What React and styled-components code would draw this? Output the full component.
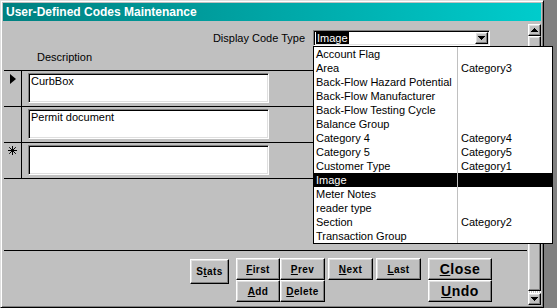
import React from 'react';
import styled, { createGlobalStyle } from 'styled-components';

const GlobalStyle = createGlobalStyle`
  html, body {
    margin: 0;
    padding: 0;
    background: #808080;
  }
  body {
    font-family: 'Liberation Sans', Arial, sans-serif;
    font-size: 11px;
    color: #000;
  }
`;

const codeTypes = [
  ['Account Flag', ''],
  ['Area', 'Category3'],
  ['Back-Flow Hazard Potential', ''],
  ['Back-Flow Manufacturer', ''],
  ['Back-Flow Testing Cycle', ''],
  ['Balance Group', ''],
  ['Category 4', 'Category4'],
  ['Category 5', 'Category5'],
  ['Customer Type', 'Category1'],
  ['Image', ''],
  ['Meter Notes', ''],
  ['reader type', ''],
  ['Section', 'Category2'],
  ['Transaction Group', ''],
];

const records = [
  {marker: 'current', text: 'CurbBox'},
  {marker: '', text: 'Permit document'},
  {marker: 'new', text: ''},
];

function DownArrow() {
  return (
    <svg width="7" height="4" viewBox="0 0 7 4" shapeRendering="crispEdges">
      <polygon points="0,0 7,0 3.5,4" fill="#000" />
    </svg>
  );
}

function UpArrow() {
  return (
    <svg width="7" height="4" viewBox="0 0 7 4" shapeRendering="crispEdges">
      <polygon points="0,4 7,4 3.5,0" fill="#000" />
    </svg>
  );
}

function RecordMarker({type}) {
  if (type === 'current') {
    return (
      <svg width="6" height="10" viewBox="0 0 6 10">
        <polygon points="0,0 6,5 0,10" fill="#000" />
      </svg>
    );
  }
  if (type === 'new') {
    return (
      <svg width="9" height="9" viewBox="0 0 9 9" stroke="#000" strokeWidth="1">
        <line x1="4.5" y1="0" x2="4.5" y2="9" />
        <line x1="0" y1="4.5" x2="9" y2="4.5" />
        <line x1="1.2" y1="1.2" x2="7.8" y2="7.8" />
        <line x1="7.8" y1="1.2" x2="1.2" y2="7.8" />
      </svg>
    );
  }
  return null;
}

function Label({text, hot}) {
  const i = text.indexOf(hot);
  return (
    <span>
      {text.slice(0, i)}
      <u>{hot}</u>
      {text.slice(i + 1)}
    </span>
  );
}

export default function App() {
  return (
    <>
      <GlobalStyle />
      <Window>
        <TitleBar>User-Defined Codes Maintenance</TitleBar>
        <Body>
          <Form>
            <Header>
              <ComboRow>
                <ComboLabel>Display Code Type</ComboLabel>
                <Combo>
                  <ComboValue>Image</ComboValue>
                  <DropButton>
                    <DownArrow />
                  </DropButton>
                  <DropList>
                    {codeTypes.map(([name, cat]) => (
                      <ListRow key={name} $selected={name === 'Image'}>
                        <NameCell>{name}</NameCell>
                        <CatCell>{cat}</CatCell>
                      </ListRow>
                    ))}
                  </DropList>
                </Combo>
              </ComboRow>
              <ColumnLabel>Description</ColumnLabel>
            </Header>
            <Detail>
              {records.map((r, i) => (
                <RecordRow key={i}>
                  <Selector>
                    <RecordMarker type={r.marker} />
                  </Selector>
                  <TextBox>{r.text}</TextBox>
                </RecordRow>
              ))}
            </Detail>
            <Spacer />
            <Footer>
              <Button $w={39} $h={25} $mt={1}>
                <Label text="Stats" hot="t" />
              </Button>
              <NavGroup>
                <ButtonRow>
                  <Button $w={44}>
                    <Label text="First" hot="F" />
                  </Button>
                  <Button $w={45}>
                    <Label text="Prev" hot="P" />
                  </Button>
                  <Button $w={45} $ml={3}>
                    <Label text="Next" hot="N" />
                  </Button>
                  <Button $w={45} $ml={3}>
                    <Label text="Last" hot="L" />
                  </Button>
                </ButtonRow>
                <ButtonRow>
                  <Button $w={44}>
                    <Label text="Add" hot="A" />
                  </Button>
                  <Button $w={45}>
                    <Label text="Delete" hot="D" />
                  </Button>
                </ButtonRow>
              </NavGroup>
              <NavGroup>
                <Button $w={64} $big>
                  <Label text="Close" hot="C" />
                </Button>
                <Button $w={64} $big>
                  <Label text="Undo" hot="U" />
                </Button>
              </NavGroup>
            </Footer>
          </Form>
          <ScrollBar>
            <ScrollButton>
              <UpArrow />
            </ScrollButton>
            <ScrollThumb />
            <ScrollGap />
            <ScrollButton>
              <DownArrow />
            </ScrollButton>
          </ScrollBar>
        </Body>
      </Window>
    </>
  );
}

const raised = `
  border: 1px solid;
  border-color: #fff #000 #000 #fff;
  box-shadow: inset -1px -1px #808080, inset 1px 1px #dfdfdf;
`;

const sunken = `
  border: 1px solid;
  border-color: #808080 #fff #fff #808080;
  box-shadow: inset 1px 1px #000, inset -1px -1px #dfdfdf;
`;

const Window = styled.div`
  box-sizing: border-box;
  width: 544px;
  height: 308px;
  display: flex;
  flex-direction: column;
  padding: 2px;
  background: #c0c0c0;
  border: 1px solid;
  border-color: #dfdfdf #000 #000 #dfdfdf;
  box-shadow: inset 1px 1px #fff, inset -1px -1px #808080;
`;

const TitleBar = styled.div`
  flex-shrink: 0;
  height: 18px;
  display: flex;
  align-items: center;
  padding-left: 3px;
  background: linear-gradient(90deg, #008080, #00cccc);
  color: #fff;
  font-weight: bold;
  font-size: 12px;
`;

const Body = styled.div`
  flex: 1;
  min-height: 0;
  display: flex;
`;

const Form = styled.div`
  flex: 1;
  display: flex;
  flex-direction: column;
  padding-left: 1px;
  padding-right: 1px;
`;

const Header = styled.div`
  height: 49px;
  flex-shrink: 0;
`;

const ComboRow = styled.div`
  display: flex;
  align-items: center;
  padding-top: 9px;
`;

const ComboLabel = styled.div`
  width: 301px;
  margin-right: 8px;
  text-align: right;
`;

const Combo = styled.div`
  position: relative;
  box-sizing: border-box;
  width: 177px;
  height: 16px;
  padding: 1px;
  display: flex;
  align-items: center;
  background: #fff;
  ${sunken}
`;

const ComboValue = styled.span`
  margin-left: 1px;
  padding: 0 1px;
  height: 12px;
  line-height: 12px;
  background: #000;
  color: #fff;
`;

const DropButton = styled.div`
  box-sizing: border-box;
  margin-left: auto;
  width: 13px;
  height: 12px;
  display: flex;
  align-items: center;
  justify-content: center;
  background: #c0c0c0;
  ${raised}
`;

const DropList = styled.div`
  position: absolute;
  top: 15px;
  left: -1px;
  z-index: 2;
  box-sizing: border-box;
  width: 240px;
  border: 1px solid #000;
  background: #fff;
`;

const ListRow = styled.div`
  display: flex;
  height: 14px;
  line-height: 14px;
  background: ${(p) => (p.$selected ? '#000' : '#fff')};
  color: ${(p) => (p.$selected ? '#fff' : '#000')};
  white-space: nowrap;
`;

const NameCell = styled.div`
  width: 141px;
  padding-left: 2px;
`;

const CatCell = styled.div`
  flex: 1;
  padding-left: 3px;
  border-left: 1px solid #c0c0c0;
`;

const ColumnLabel = styled.div`
  margin-top: 5px;
  padding-left: 33px;
`;

const Detail = styled.div`
  flex-shrink: 0;
  border-top: 1px solid #000;
`;

const RecordRow = styled.div`
  display: flex;
  height: 35px;
  border-bottom: 1px solid #000;
`;

const Selector = styled.div`
  width: 18px;
  display: flex;
  justify-content: center;
  align-items: flex-start;
  padding-top: 3px;
  box-sizing: border-box;
  border-right: 1px solid #000;
`;

const TextBox = styled.div`
  box-sizing: border-box;
  width: 241px;
  height: 30px;
  margin: 2px 0 0 6px;
  padding: 1px 2px;
  background: #fff;
  ${sunken}
`;

const Spacer = styled.div`
  flex: 1;
`;

const Footer = styled.div`
  flex-shrink: 0;
  height: 55px;
  box-sizing: border-box;
  display: flex;
  align-items: flex-start;
  padding: 7px 0 0 186px;
  border-top: 1px solid #000;
`;

const NavGroup = styled.div`
  display: flex;
  flex-direction: column;
  margin-left: 7px;
`;

const ButtonRow = styled.div`
  display: flex;
`;

const Button = styled.button`
  box-sizing: border-box;
  width: ${(p) => p.$w}px;
  height: ${(p) => p.$h || 22}px;
  margin: ${(p) => p.$mt || 0}px 0 0 ${(p) => p.$ml || 0}px;
  padding: 0;
  display: flex;
  align-items: center;
  justify-content: center;
  background: #c0c0c0;
  color: #000;
  font-family: 'Liberation Sans', Arial, sans-serif;
  font-weight: bold;
  font-size: ${(p) => (p.$big ? 14 : 10)}px;
  letter-spacing: ${(p) => (p.$big ? 0.5 : 0.4)}px;
  ${raised}
`;

const ScrollBar = styled.div`
  width: 13px;
  margin-top: 3px;
  display: flex;
  flex-direction: column;
`;

const ScrollButton = styled.div`
  box-sizing: border-box;
  height: 12px;
  display: flex;
  align-items: center;
  justify-content: center;
  background: #c0c0c0;
  ${raised}
`;

const ScrollThumb = styled.div`
  flex: 1;
  background: #c0c0c0;
  ${raised}
`;

const ScrollGap = styled.div`
  height: 2px;
  background: repeating-linear-gradient(90deg, #fff 0 1px, #c0c0c0 1px 2px);
`;
